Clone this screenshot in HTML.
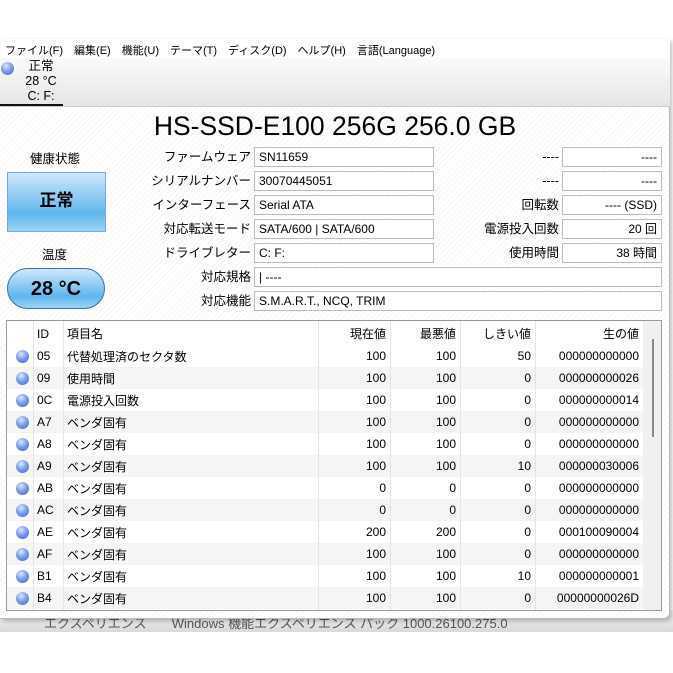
<!DOCTYPE html>
<html><head><meta charset="utf-8"><style>
*{margin:0;padding:0;box-sizing:border-box}
body{width:673px;height:673px;background:#fff;font-family:"Liberation Sans","Noto Sans CJK JP",sans-serif;font-size:12px;color:#000;position:relative;overflow:hidden}
.abs{position:absolute;white-space:nowrap}
.menu span{margin-right:11px}
.box{position:absolute;height:20px;border:1px solid #bcbcbc;background:#fff;padding:0 4px;line-height:18px;font-size:12px}
.lbl{position:absolute;text-align:right;font-size:12.5px;line-height:20px}
table{border-collapse:collapse;font-size:12px}
td{height:22px;padding:0 4px;white-space:nowrap}
.dot{width:13px;height:13px;border-radius:50%;background:radial-gradient(circle at 40% 30%,#dfe6ff 0,#7d9cf0 45%,#3b63d6 100%);margin-left:5px}
</style></head><body>
<div class="abs" style="left:0;top:610px;width:673px;height:22px;background:linear-gradient(#f4f4f4,#d9d9d9)"></div>
<div class="abs" style="left:44px;top:613px;font-size:13px;color:#555">エクスペリエンス&nbsp;&nbsp;&nbsp;&nbsp;&nbsp;&nbsp;&nbsp;Windows 機能エクスペリエンス パック 1000.26100.275.0</div>
<div class="abs" style="left:0;top:39px;width:670px;height:580px;background:#fff;border-right:1px solid #bbb;border-bottom:1px solid #bbb;box-shadow:2px 2px 4px rgba(0,0,0,.25);border-radius:0 0 6px 0;background-image:repeating-linear-gradient(135deg,#fff 0 3px,#f6f6f6 3px 4px)"></div>
<div class="abs" style="left:0;top:39px;width:670px;height:20px;background:#fff"></div>
<div class="abs menu" style="left:5px;top:42px;font-size:11px">
<span>ファイル(F)</span><span>編集(E)</span><span>機能(U)</span><span>テーマ(T)</span><span>ディスク(D)</span><span>ヘルプ(H)</span><span>言語(Language)</span></div>
<div class="abs" style="left:0;top:58px;width:670px;height:49px;background:linear-gradient(#fafafa,#e6e6e6);border-bottom:1px solid #ccc"></div>
<div class="abs dot" style="left:-4px;top:62px"></div>
<div class="abs" style="left:25px;top:59px;font-size:12.5px;line-height:15px;text-align:center;width:32px">正常<br>28 °C<br>C: F:</div>
<div class="abs" style="left:0;top:104px;width:63px;height:2px;background:#111"></div>
<div class="abs" style="left:0;top:111px;width:668px;text-align:center;font-size:26.5px;line-height:30px;padding-left:2px">HS-SSD-E100 256G 256.0 GB</div>
<div class="abs" style="left:30px;top:148px;font-size:12.5px">健康状態</div>
<div class="abs" style="left:7px;top:172px;width:99px;height:60px;border:1px solid #7aa9d6;background:linear-gradient(#cfe8fb,#5fb6ee 70%,#9dd4f5);text-align:center;line-height:56px;font-size:17px;font-weight:bold">正常</div>
<div class="abs" style="left:42px;top:244px;font-size:12.5px">温度</div>
<div class="abs" style="left:7px;top:268px;width:98px;height:41px;border:1px solid #3a6fb5;border-radius:21px;background:linear-gradient(#cfe8fb,#5fb6ee 70%,#9dd4f5);text-align:center;line-height:40px;font-size:20px;font-weight:bold">28 °C</div>
<div class="lbl" style="left:130px;top:147px;width:121px">ファームウェア</div>
<div class="lbl" style="left:130px;top:171px;width:121px">シリアルナンバー</div>
<div class="lbl" style="left:130px;top:195px;width:121px">インターフェース</div>
<div class="lbl" style="left:130px;top:219px;width:121px">対応転送モード</div>
<div class="lbl" style="left:130px;top:243px;width:121px">ドライブレター</div>
<div class="lbl" style="left:130px;top:267px;width:121px">対応規格</div>
<div class="lbl" style="left:130px;top:291px;width:121px">対応機能</div>
<div class="box" style="left:254px;top:147px;width:180px">SN11659</div>
<div class="box" style="left:254px;top:171px;width:180px">30070445051</div>
<div class="box" style="left:254px;top:195px;width:180px">Serial ATA</div>
<div class="box" style="left:254px;top:219px;width:180px">SATA/600 | SATA/600</div>
<div class="box" style="left:254px;top:243px;width:180px">C: F:</div>
<div class="box" style="left:254px;top:267px;width:408px">| ----</div>
<div class="box" style="left:254px;top:291px;width:408px">S.M.A.R.T., NCQ, TRIM</div>
<div class="lbl" style="left:440px;top:147px;width:119px">----</div>
<div class="lbl" style="left:440px;top:171px;width:119px">----</div>
<div class="lbl" style="left:440px;top:195px;width:119px">回転数</div>
<div class="lbl" style="left:440px;top:219px;width:119px">電源投入回数</div>
<div class="lbl" style="left:440px;top:243px;width:119px">使用時間</div>
<div class="box" style="left:562px;top:147px;width:100px;text-align:right">----</div>
<div class="box" style="left:562px;top:171px;width:100px;text-align:right">----</div>
<div class="box" style="left:562px;top:195px;width:100px;text-align:right">---- (SSD)</div>
<div class="box" style="left:562px;top:219px;width:100px;text-align:right">20 回</div>
<div class="box" style="left:562px;top:243px;width:100px;text-align:right">38 時間</div>
<div class="abs" style="left:6px;top:320px;width:656px;height:291px;border:1px solid #999;background:#fff;overflow:hidden">
<div class="abs" style="left:636px;top:0;width:18px;height:290px;background:#f0f0f0"></div>
<div class="abs" style="left:645px;top:18px;width:2px;height:98px;background:#888"></div>
<table style="position:absolute;left:0;top:1px;width:636px">
<colgroup><col style="width:26px"><col style="width:30px"><col style="width:255px"><col style="width:72px"><col style="width:70px"><col style="width:75px"><col style="width:108px"></colgroup>
<tr style="height:23px"><td></td><td>ID</td><td>項目名</td><td align="right">現在値</td><td align="right">最悪値</td><td align="right">しきい値</td><td align="right">生の値</td></tr>
</table>
<table id="t" style="position:absolute;left:0;top:24px;width:636px">
<colgroup><col style="width:26px"><col style="width:30px"><col style="width:255px"><col style="width:72px"><col style="width:70px"><col style="width:75px"><col style="width:108px"></colgroup>
<tr><td><div class="dot"></div></td><td>05</td><td>代替処理済のセクタ数</td><td align="right">100</td><td align="right">100</td><td align="right">50</td><td align="right">000000000000</td></tr>
<tr style="background:#f5f5f5"><td><div class="dot"></div></td><td>09</td><td>使用時間</td><td align="right">100</td><td align="right">100</td><td align="right">0</td><td align="right">000000000026</td></tr>
<tr><td><div class="dot"></div></td><td>0C</td><td>電源投入回数</td><td align="right">100</td><td align="right">100</td><td align="right">0</td><td align="right">000000000014</td></tr>
<tr style="background:#f5f5f5"><td><div class="dot"></div></td><td>A7</td><td>ベンダ固有</td><td align="right">100</td><td align="right">100</td><td align="right">0</td><td align="right">000000000000</td></tr>
<tr><td><div class="dot"></div></td><td>A8</td><td>ベンダ固有</td><td align="right">100</td><td align="right">100</td><td align="right">0</td><td align="right">000000000000</td></tr>
<tr style="background:#f5f5f5"><td><div class="dot"></div></td><td>A9</td><td>ベンダ固有</td><td align="right">100</td><td align="right">100</td><td align="right">10</td><td align="right">000000030006</td></tr>
<tr><td><div class="dot"></div></td><td>AB</td><td>ベンダ固有</td><td align="right">0</td><td align="right">0</td><td align="right">0</td><td align="right">000000000000</td></tr>
<tr style="background:#f5f5f5"><td><div class="dot"></div></td><td>AC</td><td>ベンダ固有</td><td align="right">0</td><td align="right">0</td><td align="right">0</td><td align="right">000000000000</td></tr>
<tr><td><div class="dot"></div></td><td>AE</td><td>ベンダ固有</td><td align="right">200</td><td align="right">200</td><td align="right">0</td><td align="right">000100090004</td></tr>
<tr style="background:#f5f5f5"><td><div class="dot"></div></td><td>AF</td><td>ベンダ固有</td><td align="right">100</td><td align="right">100</td><td align="right">0</td><td align="right">000000000000</td></tr>
<tr><td><div class="dot"></div></td><td>B1</td><td>ベンダ固有</td><td align="right">100</td><td align="right">100</td><td align="right">10</td><td align="right">000000000001</td></tr>
<tr style="background:#f5f5f5"><td><div class="dot"></div></td><td>B4</td><td>ベンダ固有</td><td align="right">100</td><td align="right">100</td><td align="right">0</td><td align="right">00000000026D</td></tr>
</table>
<div class="abs" style="left:26px;top:0;height:290px;border-left:1px solid #e6e6e6"></div>
<div class="abs" style="left:56px;top:0;height:290px;border-left:1px solid #e6e6e6"></div>
<div class="abs" style="left:311px;top:0;height:290px;border-left:1px solid #e6e6e6"></div>
<div class="abs" style="left:383px;top:0;height:290px;border-left:1px solid #e6e6e6"></div>
<div class="abs" style="left:453px;top:0;height:290px;border-left:1px solid #e6e6e6"></div>
<div class="abs" style="left:528px;top:0;height:290px;border-left:1px solid #e6e6e6"></div>
</div>
</body></html>
